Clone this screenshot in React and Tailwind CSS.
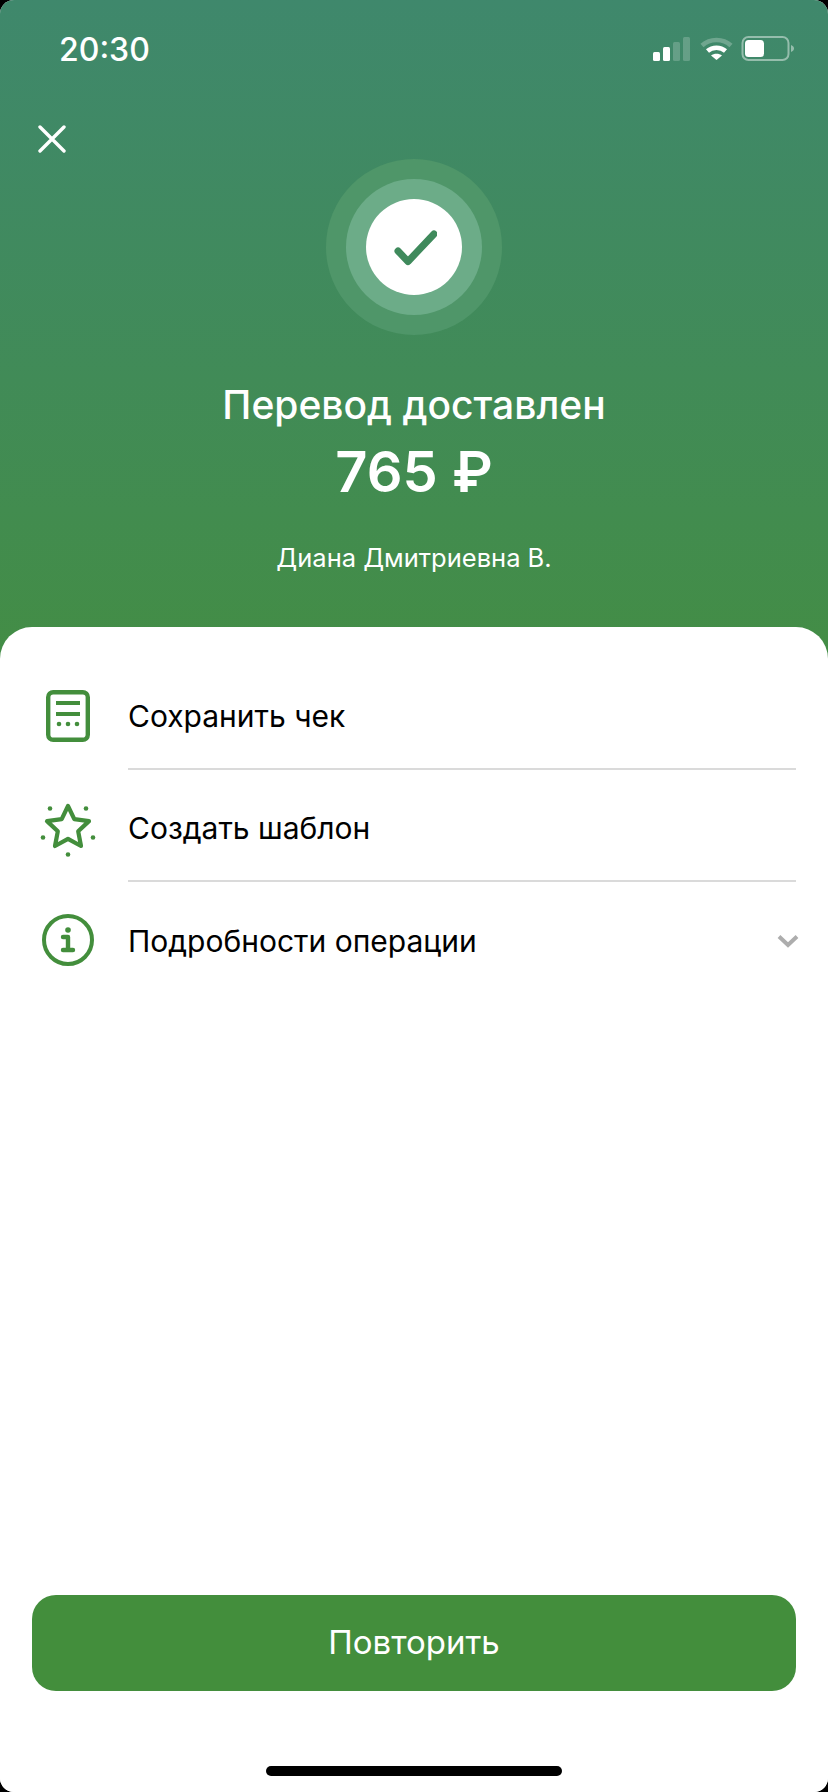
import React from 'react';

const StatusIcons = () => (
  <svg width="144" height="28" viewBox="0 0 144 28" fill="none">
    <rect x="3" y="16" width="7" height="9" rx="1.5" fill="#fff" />
    <rect x="13" y="11" width="7" height="14" rx="1.5" fill="#fff" />
    <rect x="23" y="6" width="7" height="19" rx="1.5" fill="#fff" fillOpacity="0.2" />
    <rect x="33" y="1" width="7" height="24" rx="1.5" fill="#fff" fillOpacity="0.2" />
    <path d="M52 9.5C60 2 73 2 81 9.5" stroke="#fff" strokeOpacity="0.25" strokeWidth="4.5" />
    <path d="M57.5 15C62.5 10.5 70.5 10.5 75.5 15" stroke="#fff" strokeWidth="4.5" />
    <path d="M66.5 24L61 19.5C64 17 69 17 72 19.5Z" fill="#fff" />
    <rect x="92.5" y="1" width="46" height="23" rx="6" stroke="#fff" strokeOpacity="0.45" strokeWidth="2" />
    <rect x="95" y="4" width="19" height="17" rx="3.5" fill="#fff" />
    <path d="M141 9C143 10 144 11 144 12.5C144 14 143 15 141 16Z" fill="#fff" fillOpacity="0.45" />
  </svg>
);

const CloseIcon = () => (
  <svg width="28" height="28" viewBox="0 0 28 28" fill="none">
    <path d="M2 2L26 26M26 2L2 26" stroke="#fff" strokeWidth="3.4" strokeLinecap="round" />
  </svg>
);

const ReceiptIcon = () => (
  <svg width="72" height="72" viewBox="0 0 72 72" fill="none">
    <rect x="16.2" y="14.2" width="39.6" height="47.6" rx="5" stroke="#438E3C" strokeWidth="4.4" />
    <path d="M24 25H48M24 36H48" stroke="#438E3C" strokeWidth="4" />
    <circle cx="27" cy="46" r="2.3" fill="#438E3C" />
    <circle cx="36" cy="46" r="2.3" fill="#438E3C" />
    <circle cx="45" cy="46" r="2.3" fill="#438E3C" />
  </svg>
);

const StarIcon = () => (
  <svg width="72" height="72" viewBox="0 0 72 72" fill="none">
    <g transform="translate(0 7.5)">
      <path
        d="M36 8.5L42.3 21.6L57 23.6L46.2 33.8L49 48.5L36 41.4L23 48.5L25.8 33.8L15 23.6L29.7 21.6Z"
        stroke="#438E3C"
        strokeWidth="4.2"
        strokeLinejoin="round"
      />
      <circle cx="18" cy="11" r="2.3" fill="#438E3C" />
      <circle cx="54" cy="11" r="2.3" fill="#438E3C" />
      <circle cx="11" cy="40" r="2.3" fill="#438E3C" />
      <circle cx="61" cy="40" r="2.3" fill="#438E3C" />
      <circle cx="36" cy="57" r="2.3" fill="#438E3C" />
    </g>
  </svg>
);

const InfoIcon = () => (
  <svg width="72" height="72" viewBox="0 0 72 72" fill="none">
    <g transform="translate(0 2)">
      <circle cx="36" cy="36" r="24" stroke="#438E3C" strokeWidth="4" />
      <circle cx="36" cy="26" r="2.8" fill="#438E3C" />
      <path d="M31 33H36V46M31 46H41" stroke="#438E3C" strokeWidth="4.4" strokeLinecap="round" strokeLinejoin="round" />
    </g>
  </svg>
);

const Chevron = () => (
  <svg width="22" height="14" viewBox="0 0 22 14" fill="none">
    <path d="M2 2.5L11 11L20 2.5" stroke="#ADADAD" strokeWidth="4" />
  </svg>
);

const rows = [
  { label: 'Сохранить чек', icon: <ReceiptIcon /> },
  { label: 'Создать шаблон', icon: <StarIcon /> },
  { label: 'Подробности операции', icon: <InfoIcon />, chevron: true },
];

export default function App() {
  return (
    <div className="h-[1792px] w-[828px] bg-black font-['Inter',sans-serif]">
      <div className="flex h-full flex-col overflow-hidden rounded-[14px] bg-white">
        <div className="bg-gradient-to-b from-[#3F886C] to-[#438D45] pb-[32px]">
          {/* Status bar */}
          <div className="flex items-center justify-between pl-[59px] pr-[34px] pt-[30px]">
            <span className="text-[32px] leading-[40px] font-medium text-white">20:30</span>
            <StatusIcons />
          </div>

          {/* Header */}
          <div className="h-[557px] px-[38px] pt-[55px]">
            <CloseIcon />
            <div className="mt-[6px] flex flex-col items-center text-white">
              <div className="flex h-[176px] w-[176px] items-center justify-center rounded-full bg-[#4F9669]">
                <div className="flex h-[136px] w-[136px] items-center justify-center rounded-full bg-[#6CAC88]">
                  <div className="flex h-[96px] w-[96px] items-center justify-center rounded-full bg-white">
                    <svg width="46" height="38" viewBox="0 0 46 38" fill="none">
                      <path d="M7 23L17 33.5L43 6" stroke="#3F8A5C" strokeWidth="7" strokeLinecap="round" strokeLinejoin="round" />
                    </svg>
                  </div>
                </div>
              </div>
              <div className="mt-[45px] text-[39px] leading-[50px] font-medium">Перевод доставлен</div>
              <div className="mt-[7px] text-[56px] leading-[70px] font-semibold">765 ₽</div>
              <div className="mt-[33px] text-[25.5px] leading-[36px]">Диана Дмитриевна В.</div>
            </div>
          </div>
        </div>

        {/* Sheet */}
        <div className="-mt-[32px] flex flex-1 flex-col rounded-t-[32px] bg-white pt-[31px]">
          <div className="flex-1">
            {rows.map((row, i) => (
              <div key={row.label} className="flex h-[112px] pl-[32px] pr-[32px]">
                <div className="flex h-full w-[72px] shrink-0 items-center justify-center">{row.icon}</div>
                <div
                  className={`ml-[24px] flex flex-1 items-center justify-between pt-[6px] ${
                    i < rows.length - 1 ? 'border-b-2 border-[#DADADA]' : ''
                  }`}
                >
                  <span className="text-[30px] leading-[40px] text-black">{row.label}</span>
                  {row.chevron && (
                    <span className="-mr-[3px]">
                      <Chevron />
                    </span>
                  )}
                </div>
              </div>
            ))}
          </div>

          <div className="px-[32px]">
            <button className="h-[96px] w-full rounded-[24px] bg-[#438E3C] text-[33px] text-white">Повторить</button>
          </div>
          <div className="flex h-[101px] items-end justify-center pb-[16px]">
            <div className="h-[10px] w-[296px] rounded-full bg-black" />
          </div>
        </div>
      </div>
    </div>
  );
}
